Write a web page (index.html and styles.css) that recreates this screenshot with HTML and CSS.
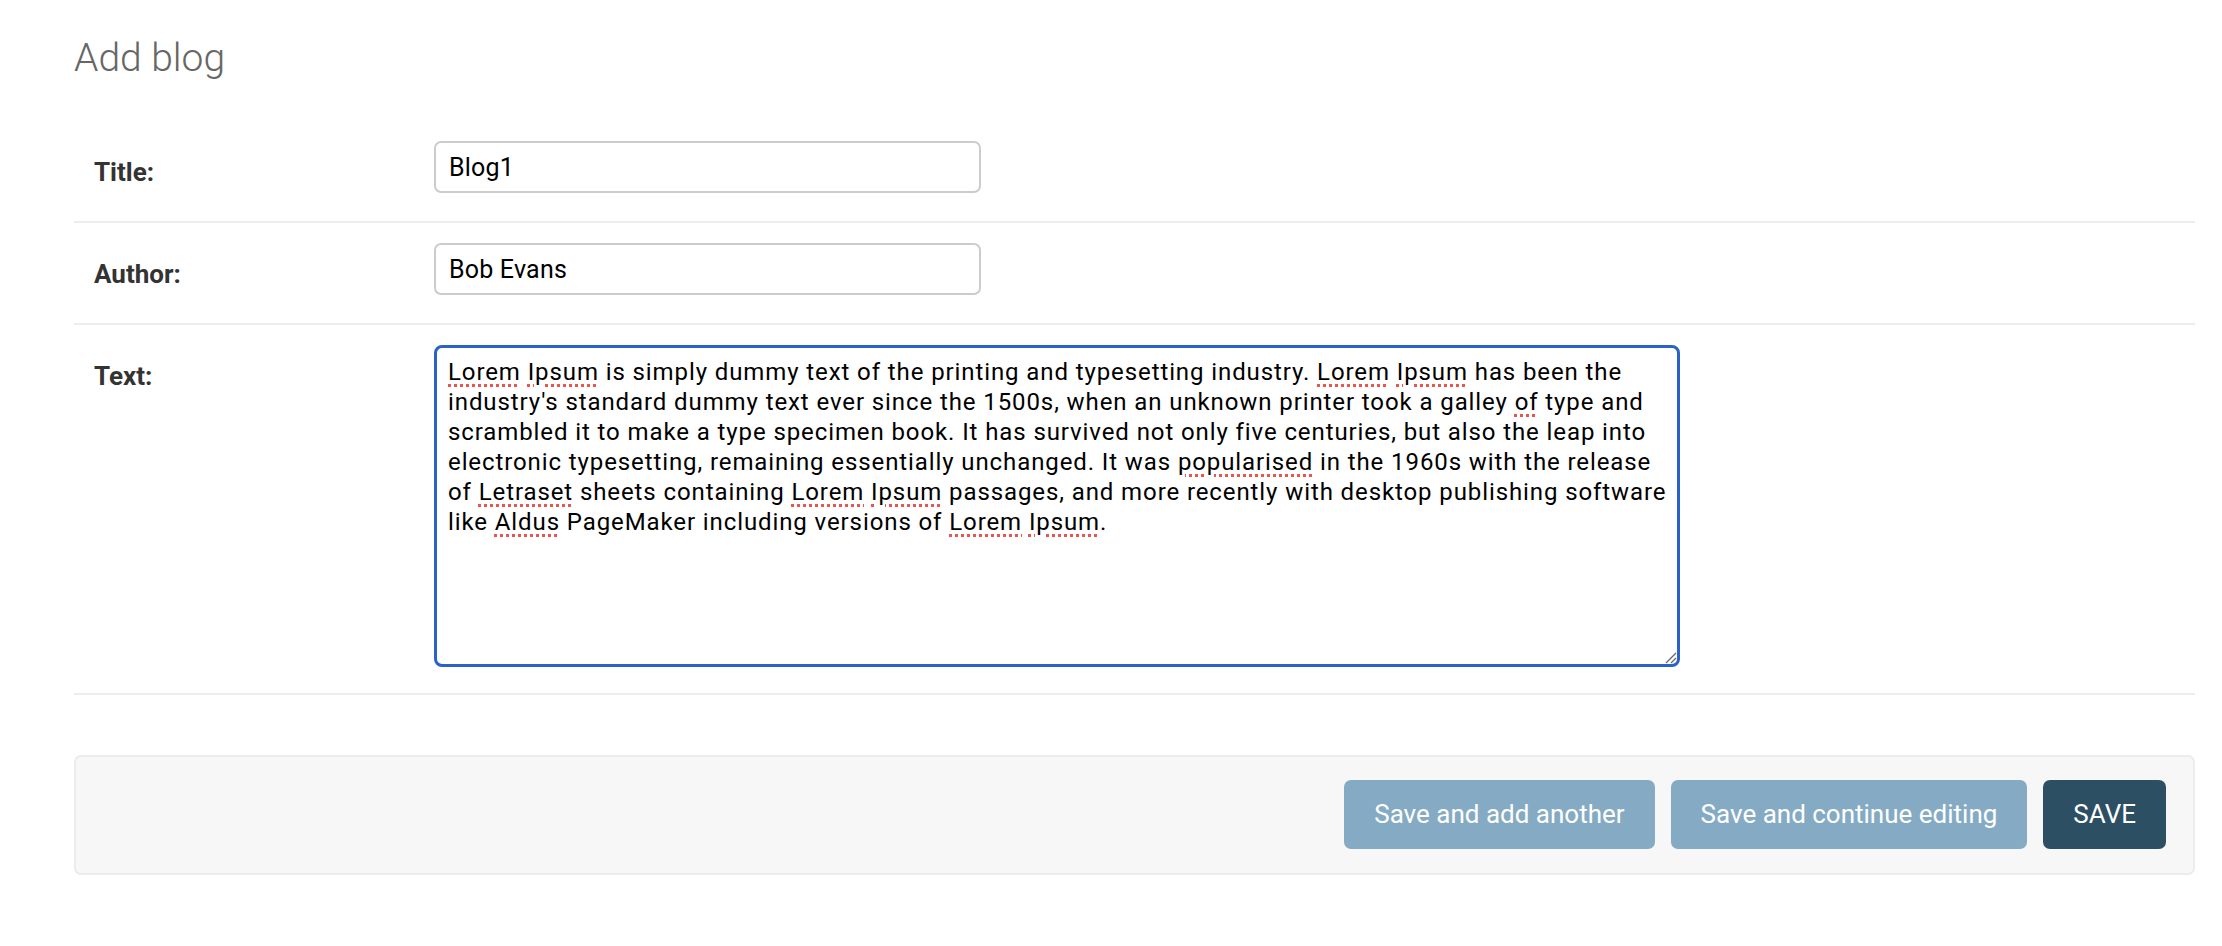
FILE: index.html
```html
<!DOCTYPE html>
<html lang="en">
<head>
<meta charset="utf-8">
<title>Add blog</title>
<link rel="stylesheet" href="styles.css">
</head>
<body>
<main class="content">
  <h1 class="page-title">Add blog</h1>
  <form class="change-form">
    <fieldset class="module">
      <div class="form-row">
        <label class="field-label" for="id_title">Title:</label>
        <input class="text-input" id="id_title" type="text" value="Blog1">
      </div>
      <div class="form-row">
        <label class="field-label" for="id_author">Author:</label>
        <input class="text-input" id="id_author" type="text" value="Bob Evans">
      </div>
      <div class="form-row form-row-large">
        <label class="field-label">Text:</label>
        <div class="text-area" role="textbox" aria-multiline="true">
          <span class="line"><span class="sp">Lorem</span> <span class="sp">Ipsum</span> is simply dummy text of the printing and typesetting industry. <span class="sp">Lorem</span> <span class="sp">Ipsum</span> has been the</span>
          <span class="line">industry's standard dummy text ever since the 1500s, when an unknown printer took a galley <span class="sp">of</span> type and</span>
          <span class="line">scrambled it to make a type specimen book. It has survived not only five centuries, but also the leap into</span>
          <span class="line">electronic typesetting, remaining essentially unchanged. It was <span class="sp">popularised</span> in the 1960s with the release</span>
          <span class="line">of <span class="sp">Letraset</span> sheets containing <span class="sp">Lorem</span> <span class="sp">Ipsum</span> passages, and more recently with desktop publishing software</span>
          <span class="line">like <span class="sp">Aldus</span> PageMaker including versions of <span class="sp">Lorem</span> <span class="sp">Ipsum</span>.</span>
          <svg class="resize-grip" width="14" height="14" viewBox="0 0 14 14" aria-hidden="true">
            <path d="M13 3 L3 13 M13 8 L8 13" stroke="#6b6b6b" stroke-width="1.4" fill="none"/>
          </svg>
        </div>
      </div>
    </fieldset>
    <div class="submit-row">
      <button type="button" class="btn">Save and add another</button>
      <button type="button" class="btn">Save and continue editing</button>
      <button type="button" class="btn btn-default">SAVE</button>
    </div>
  </form>
</main>
</body>
</html>
```
FILE: styles.css
```css
html, body {
  margin: 0;
  padding: 0;
  background: #ffffff;
}

body {
  font-family: Roboto, "Liberation Sans", Arial, sans-serif;
  color: #333333;
}

.content {
  padding: 35px 27px 0 74px;
}

.page-title {
  margin: 0 0 40px;
  font-size: 39px;
  line-height: 46px;
  font-weight: 300;
  color: #666666;
}

.change-form {
  margin: 0;
}

.module {
  margin: 0;
  padding: 0;
  border: 0;
  min-width: 0;
}

.form-row {
  display: flex;
  align-items: flex-start;
  padding: 20px 20px 28px;
  border-bottom: 2px solid #ededed;
}

.form-row-large {
  padding-bottom: 26px;
}

.field-label {
  flex: 0 0 340px;
  padding-top: 18px;
  font-size: 26px;
  line-height: 26px;
  font-weight: 700;
  color: #333333;
}

.text-input {
  box-sizing: border-box;
  width: 547px;
  height: 52px;
  margin: 0;
  padding: 0 13px;
  border: 2px solid #cccccc;
  border-radius: 7px;
  background: #ffffff;
  font-family: Roboto, "Liberation Sans", Arial, sans-serif;
  font-size: 25px;
  letter-spacing: 0.2px;
  color: #000000;
  outline: none;
}

.text-area {
  position: relative;
  box-sizing: border-box;
  width: 1246px;
  height: 322px;
  padding: 9px 11px;
  border: 3px solid #2a62c8;
  border-radius: 8px;
  background: #ffffff;
  font-size: 24px;
  line-height: 30px;
  letter-spacing: 0.9px;
  color: #000000;
  overflow: hidden;
}

.line {
  display: block;
  white-space: nowrap;
}

.sp {
  text-decoration-line: underline;
  text-decoration-style: dotted;
  text-decoration-color: #e8574f;
  text-decoration-thickness: 3px;
  text-underline-offset: 4px;
}

.resize-grip {
  position: absolute;
  right: 0;
  bottom: 0;
}

.submit-row {
  display: flex;
  justify-content: flex-end;
  gap: 16px;
  margin-top: 60px;
  padding: 23px 27px 24px;
  border: 2px solid #ececec;
  border-radius: 7px;
  background: #f7f7f7;
}

.btn {
  height: 69px;
  margin: 0;
  padding: 0 30px;
  border: 0;
  border-radius: 7px;
  background: #85abc4;
  color: #ffffff;
  font-family: Roboto, "Liberation Sans", Arial, sans-serif;
  font-size: 26px;
  line-height: 69px;
  font-weight: 400;
  cursor: pointer;
}

.btn-default {
  background: #2d4f64;
}
```
